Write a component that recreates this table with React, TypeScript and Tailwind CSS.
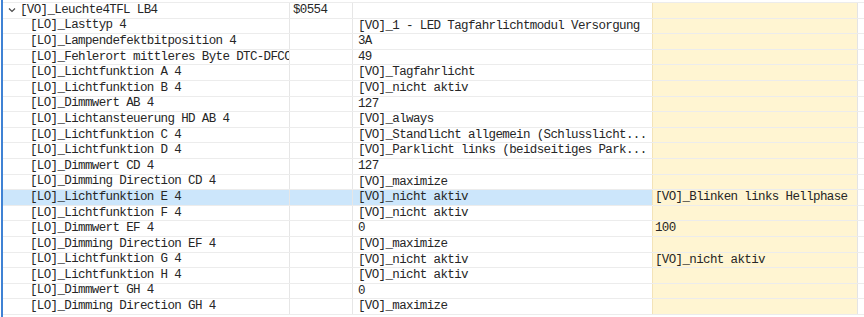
const ROWS: { name: string; value?: string; current?: string; target?: string }[] = [
  { name: "[LO]_Lasttyp 4", current: "[VO]_1 - LED Tagfahrlichtmodul Versorgung" },
  { name: "[LO]_Lampendefektbitposition 4", current: "3A" },
  { name: "[LO]_Fehlerort mittleres Byte DTC-DFCC", current: "49" },
  { name: "[LO]_Lichtfunktion A 4", current: "[VO]_Tagfahrlicht" },
  { name: "[LO]_Lichtfunktion B 4", current: "[VO]_nicht aktiv" },
  { name: "[LO]_Dimmwert AB 4", current: "127" },
  { name: "[LO]_Lichtansteuerung HD AB 4", current: "[VO]_always" },
  { name: "[LO]_Lichtfunktion C 4", current: "[VO]_Standlicht allgemein (Schlusslicht..." },
  { name: "[LO]_Lichtfunktion D 4", current: "[VO]_Parklicht links (beidseitiges Park..." },
  { name: "[LO]_Dimmwert CD 4", current: "127" },
  { name: "[LO]_Dimming Direction CD 4", current: "[VO]_maximize" },
  { name: "[LO]_Lichtfunktion E 4", current: "[VO]_nicht aktiv", target: "[VO]_Blinken links Hellphase" },
  { name: "[LO]_Lichtfunktion F 4", current: "[VO]_nicht aktiv" },
  { name: "[LO]_Dimmwert EF 4", current: "0", target: "100" },
  { name: "[LO]_Dimming Direction EF 4", current: "[VO]_maximize" },
  { name: "[LO]_Lichtfunktion G 4", current: "[VO]_nicht aktiv", target: "[VO]_nicht aktiv" },
  { name: "[LO]_Lichtfunktion H 4", current: "[VO]_nicht aktiv" },
  { name: "[LO]_Dimmwert GH 4", current: "0" },
  { name: "[LO]_Dimming Direction GH 4", current: "[VO]_maximize" },
];

const SELECTED = 11;

function Chevron() {
  return (
    <svg width="8" height="6" viewBox="0 0 8 6" className="shrink-0">
      <path d="M1 1.5 L4 4.5 L7 1.5" fill="none" stroke="#4a4a4a" strokeWidth="1.2" />
    </svg>
  );
}

function Row({
  name,
  value,
  current,
  target,
  selected,
  parent,
}: {
  name: string;
  value?: string;
  current?: string;
  target?: string;
  selected?: boolean;
  parent?: boolean;
}) {
  const sel = selected ? "bg-[#cce6fb]" : "bg-white";
  return (
    <div className="flex h-[15.6px] border-b border-[#ececec] leading-[15px]">
      <div className={`flex w-[286px] shrink-0 items-center overflow-hidden whitespace-nowrap ${sel}`}>
        {parent ? (
          <div className="flex items-center gap-[4px] pl-[5px]">
            <Chevron />
            <span>{name}</span>
          </div>
        ) : (
          <span className="pl-[27px]">{name}</span>
        )}
      </div>
      <div className={`w-[63px] shrink-0 overflow-hidden whitespace-nowrap border-l border-[#e6e6e6] pl-[3px] ${sel}`}>
        {value}
      </div>
      <div className={`w-[300px] shrink-0 overflow-hidden whitespace-nowrap border-l border-[#e6e6e6] pl-[5px] ${sel}`}>
        {current}
      </div>
      <div className="w-[205px] shrink-0 overflow-hidden whitespace-nowrap border-l border-[#f3e3b8] bg-[#fff5d2] pl-[2px]">
        {target}
      </div>
      <div className="flex-1 border-l border-[#e4e4e4] bg-white" />
    </div>
  );
}

export default function App() {
  return (
    <div className="h-[317px] w-[864px] overflow-hidden bg-white">
      <div
        className="ml-[1px] h-full border-l-2 border-[#3f82d4] pt-[2px] text-[12.5px] tracking-[-0.63px] text-[#262626]"
        style={{ fontFamily: '"Liberation Mono", "DejaVu Sans Mono", monospace' }}
      >
        <div className="border-t border-[#ececec]">
          <Row name="[VO]_Leuchte4TFL LB4" value="$0554" parent />
          {ROWS.map((r, i) => (
            <Row key={r.name} {...r} selected={i === SELECTED} />
          ))}
        </div>
      </div>
    </div>
  );
}
